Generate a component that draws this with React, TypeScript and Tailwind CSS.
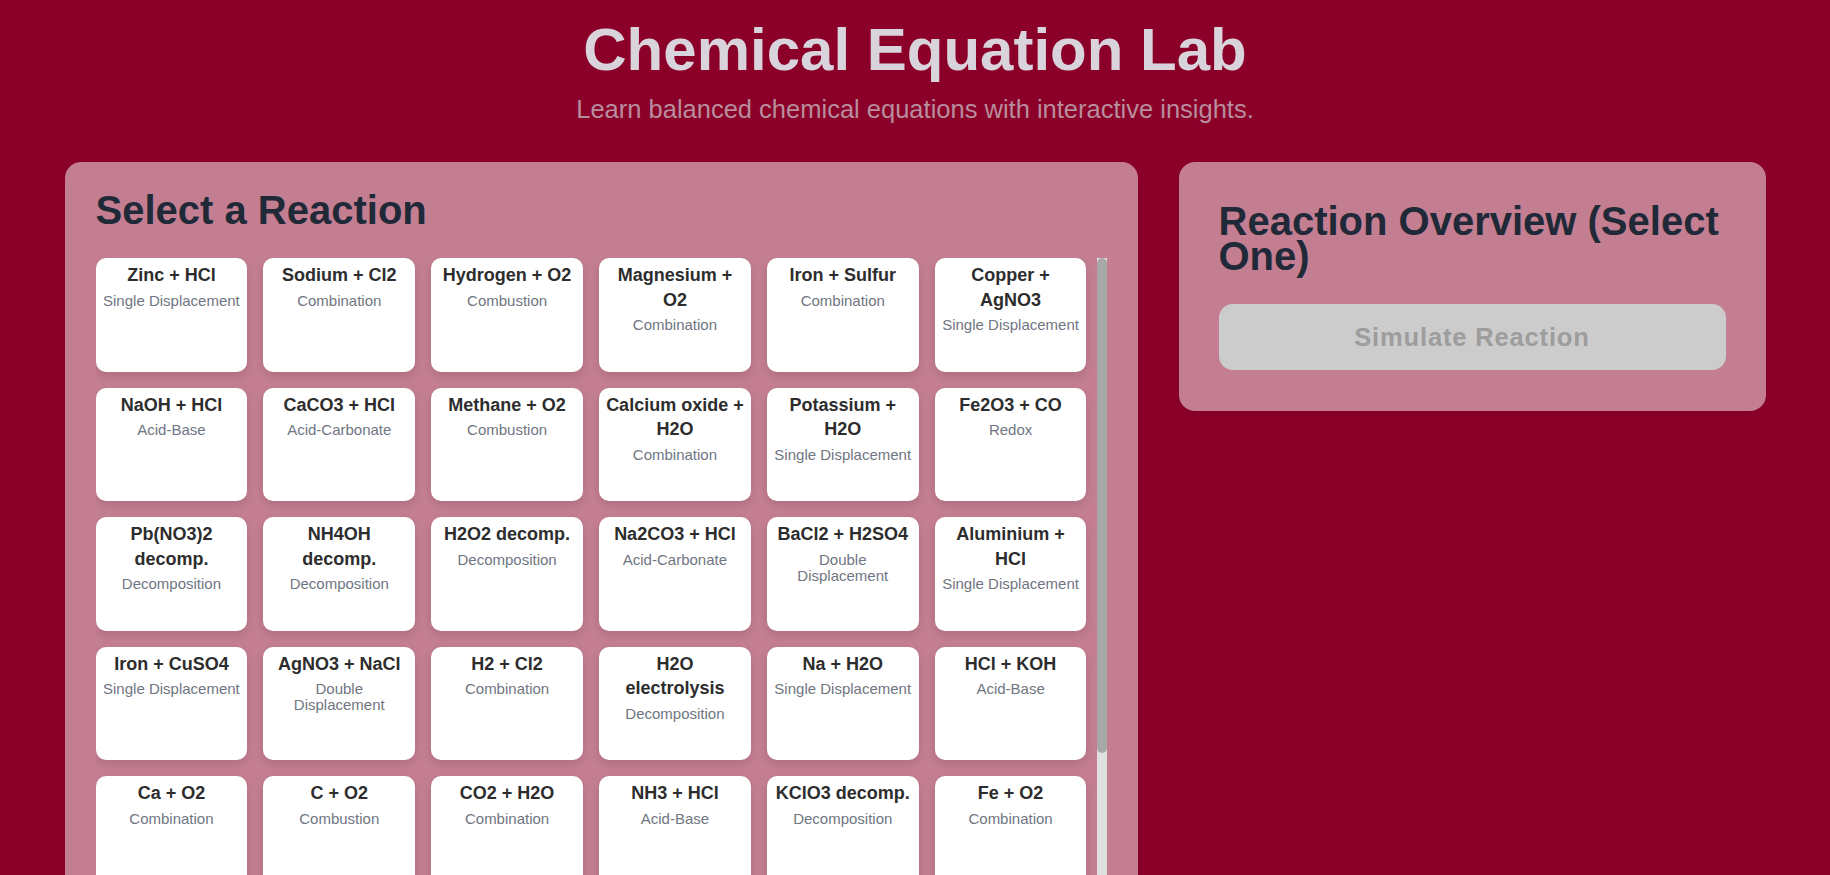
const reactions = [
  { name: "Zinc + HCl", type: "Single Displacement" },
  { name: "Sodium + Cl2", type: "Combination" },
  { name: "Hydrogen + O2", type: "Combustion" },
  { name: "Magnesium + O2", type: "Combination" },
  { name: "Iron + Sulfur", type: "Combination" },
  { name: "Copper + AgNO3", type: "Single Displacement" },
  { name: "NaOH + HCl", type: "Acid-Base" },
  { name: "CaCO3 + HCl", type: "Acid-Carbonate" },
  { name: "Methane + O2", type: "Combustion" },
  { name: "Calcium oxide + H2O", type: "Combination" },
  { name: "Potassium + H2O", type: "Single Displacement" },
  { name: "Fe2O3 + CO", type: "Redox" },
  { name: "Pb(NO3)2 decomp.", type: "Decomposition" },
  { name: "NH4OH decomp.", type: "Decomposition" },
  { name: "H2O2 decomp.", type: "Decomposition" },
  { name: "Na2CO3 + HCl", type: "Acid-Carbonate" },
  { name: "BaCl2 + H2SO4", type: "Double Displacement" },
  { name: "Aluminium + HCl", type: "Single Displacement" },
  { name: "Iron + CuSO4", type: "Single Displacement" },
  { name: "AgNO3 + NaCl", type: "Double Displacement" },
  { name: "H2 + Cl2", type: "Combination" },
  { name: "H2O electrolysis", type: "Decomposition" },
  { name: "Na + H2O", type: "Single Displacement" },
  { name: "HCl + KOH", type: "Acid-Base" },
  { name: "Ca + O2", type: "Combination" },
  { name: "C + O2", type: "Combustion" },
  { name: "CO2 + H2O", type: "Combination" },
  { name: "NH3 + HCl", type: "Acid-Base" },
  { name: "KClO3 decomp.", type: "Decomposition" },
  { name: "Fe + O2", type: "Combination" },
];

function ReactionCard({ name, type }: { name: string; type: string }) {
  return (
    <button className="h-[113.5px] rounded-[10px] bg-white px-[6px] pt-[5px] text-center shadow-[0_4px_10px_rgba(0,0,0,0.12)] flex flex-col items-center justify-start">
      <span className="block text-[18px] font-bold leading-[24.5px] text-[#2d2d2d]">{name}</span>
      <span className="mt-[5px] block text-[15px] leading-[16px] text-[#6f7682]">{type}</span>
    </button>
  );
}

export default function App() {
  return (
    <div className="h-screen overflow-hidden bg-[#8b0029] font-['Liberation_Sans',Arial,sans-serif]">
      <header className="pt-[15px] text-center">
        <h1 className="text-[60px] font-bold leading-[69px] text-[#d9d4dc]">Chemical Equation Lab</h1>
        <p className="mt-[11px] text-[25.5px] leading-[29px] text-[#b88d9d]">
          Learn balanced chemical equations with interactive insights.
        </p>
      </header>

      <main className="mt-[38px] flex items-start justify-center gap-[41px]">
        {/* reaction picker */}
        <section className="w-[1073px] rounded-2xl bg-[#c47e91] p-[31px] shadow-[0_4px_12px_rgba(0,0,0,0.06)]">
          <h2 className="text-[40px] font-bold leading-[35px] text-[#1f2937]">Select a Reaction</h2>
          <div className="mt-[30px] flex h-[630px]">
            <div className="flex-1 overflow-hidden pr-[10px]">
              <div className="grid grid-cols-6 gap-4">
                {reactions.map((r) => (
                  <ReactionCard key={r.name} name={r.name} type={r.type} />
                ))}
              </div>
            </div>
            {/* scrollbar */}
            <div className="w-[10px] shrink-0 bg-[#e0e0e0]">
              <div className="h-[495px] rounded-[5px] bg-[#a8a8a8]" />
            </div>
          </div>
        </section>

        {/* overview */}
        <aside className="w-[587px] rounded-2xl bg-[#c47e91] px-[40px] pt-[42px] pb-[41px] shadow-[0_4px_12px_rgba(0,0,0,0.06)]">
          <h2 className="text-[40px] font-bold leading-[35px] text-[#1f2937]">Reaction Overview (Select One)</h2>
          <button
            disabled
            className="mt-[30px] h-[66px] w-full rounded-[14px] bg-[#cccccc] text-[25.6px] font-bold tracking-[0.8px] text-[#9d9d9d]"
          >
            Simulate Reaction
          </button>
        </aside>
      </main>
    </div>
  );
}
